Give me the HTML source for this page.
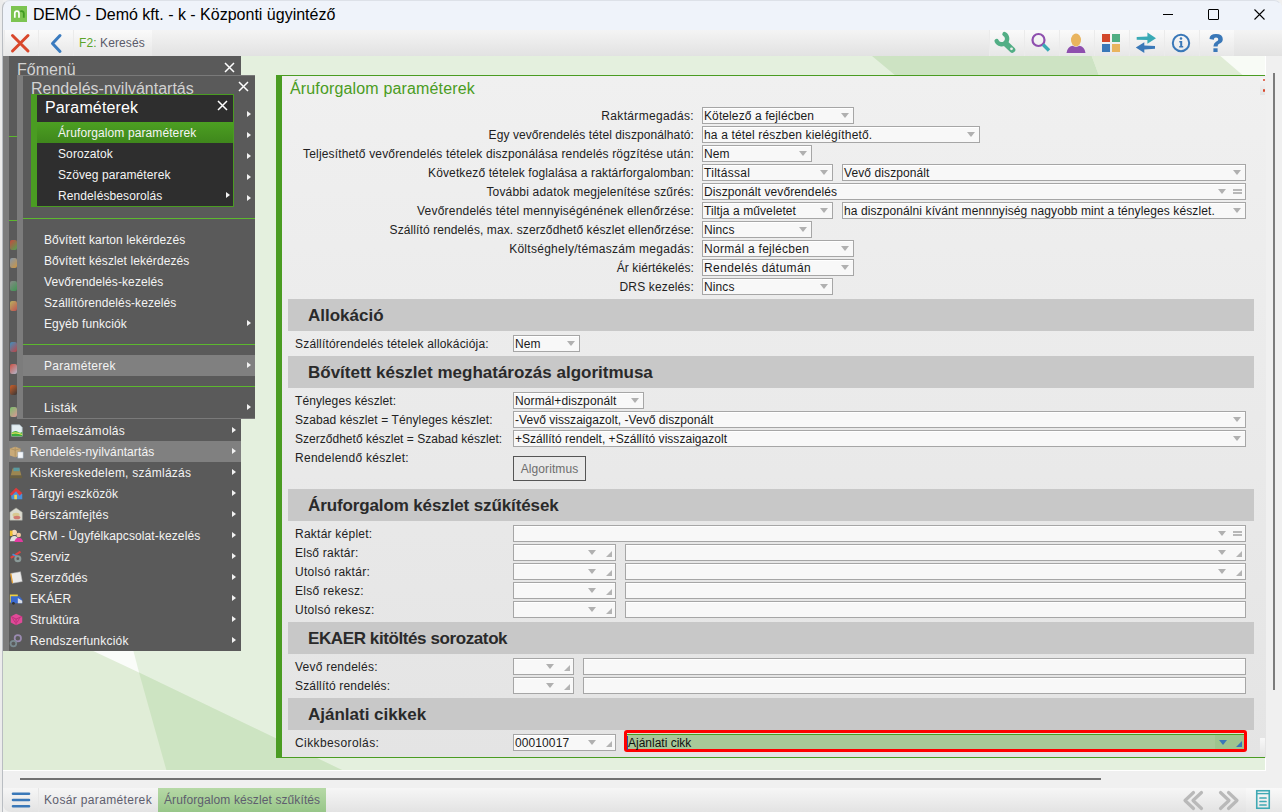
<!DOCTYPE html>
<html><head><meta charset="utf-8"><style>
*{box-sizing:border-box;margin:0;padding:0}
html,body{width:1282px;height:812px;overflow:hidden;background:#f0f0f0;font-family:"Liberation Sans",sans-serif;position:relative}
.a{position:absolute}
.t{position:absolute;white-space:nowrap;font-size:12px;line-height:17px;color:#222;letter-spacing:0.1px;padding-top:1px}
.in{position:absolute;height:17px;background:#f8f8f8;border:1px solid #a6a6a6;box-shadow:inset 0 1px 0 #fff;font-size:12px;line-height:15px;padding-left:1px;padding-top:1px;white-space:nowrap;overflow:hidden;color:#1a1a1a;letter-spacing:0.1px}
.arr{position:absolute;width:0;height:0;border-left:4px solid transparent;border-right:4px solid transparent;border-top:5px solid #b0b0b0}
.rs{position:absolute;width:0;height:0;border-left:6px solid transparent;border-bottom:6px solid #b4b4b4}
.eq{position:absolute;width:9px;height:5px;border-top:2px solid #b8b8b8;border-bottom:2px solid #b8b8b8}
.hdr{position:absolute;left:288px;width:966px;height:32px;background:#c8c8c8;font-weight:bold;font-size:17px;color:#2a2a2a;padding-left:20px;padding-top:1px;line-height:32px;white-space:nowrap}
.mi{position:absolute;white-space:nowrap;font-size:12px;color:#f4f4f4;letter-spacing:0.1px;line-height:21px;padding-top:1px}
.ar{position:absolute;width:0;height:0;border-top:3.5px solid transparent;border-bottom:3.5px solid transparent;border-left:4px solid #f2f2f2}
.sep{position:absolute;height:1px;background:#5cb82e}
.cell{position:absolute;top:30px;height:26px;background:linear-gradient(#fafafa,#e7e7e7);border-left:1px solid #ebebeb}
.ttl{position:absolute;white-space:nowrap;font-size:16px;line-height:20px}
</style></head><body>
<div class="a" style="left:0px;top:0px;width:3px;height:812px;background:#ececec"></div>
<div class="a" style="left:3px;top:0px;width:1279px;height:30px;background:#eff3fa;border-top-left-radius:8px;border-top-right-radius:8px"></div>
<div class="a" style="left:11px;top:6px;width:16px;height:16px;background:#7cc452"></div>
<svg class="a" style="left:11px;top:6px" width="16" height="16"><path d="M3.8 11.8V7.2A2.1 2.1 0 0 1 8 7.2V11.8" stroke="#fff" stroke-width="1.7" fill="none"/><path d="M9.2 5.6A2.2 2.2 0 0 1 12.8 7.4V11.8" stroke="#3f9a22" stroke-width="1.8" fill="none"/></svg>
<div class="ttl" style="left:33px;top:5px;color:#000">DEMÓ - Demó kft. - k - Központi ügyintéző</div>
<div class="a" style="left:1163px;top:14px;width:10px;height:1px;background:#000"></div>
<div class="a" style="left:1208px;top:9px;width:11px;height:11px;border:1px solid #000;border-radius:1px"></div>
<svg class="a" style="left:1253px;top:8px" width="13" height="13"><path d="M1.5 1.5L11.5 11.5M11.5 1.5L1.5 11.5" stroke="#000" stroke-width="1.1"/></svg>
<div class="a" style="left:3px;top:30px;width:1279px;height:26px;background:linear-gradient(#f4f4f4,#e2e2e2)"></div>
<div class="cell" style="left:4px;top:30px;width:34px;height:26px;"></div>
<div class="cell" style="left:38px;top:30px;width:35px;height:26px;"></div>
<div class="cell" style="left:73px;top:30px;width:79px;height:26px;"></div>
<svg class="a" style="left:9px;top:33px" width="24" height="21"><path d="M3.5 2.5L19 18M19 2.5L3.5 18" stroke="#d9472b" stroke-width="3" stroke-linecap="round"/></svg>
<svg class="a" style="left:48px;top:33px" width="16" height="21"><path d="M12 2.5L4.5 10.5L12 18.5" stroke="#3a7bbf" stroke-width="3" stroke-linecap="round" stroke-linejoin="round" fill="none"/></svg>
<div class="t" style="left:79px;top:34px;letter-spacing:0.1px"><span style="color:#5aa52a">F2:</span><span style="color:#5a5a6a"> Keresés</span></div>
<div class="cell" style="left:989px;top:30px;width:35px;height:26px;"></div>
<div class="cell" style="left:1024px;top:30px;width:35px;height:26px;"></div>
<div class="cell" style="left:1059px;top:30px;width:35px;height:26px;"></div>
<div class="cell" style="left:1094px;top:30px;width:35px;height:26px;"></div>
<div class="cell" style="left:1129px;top:30px;width:35px;height:26px;"></div>
<div class="cell" style="left:1164px;top:30px;width:35px;height:26px;"></div>
<div class="cell" style="left:1199px;top:30px;width:35px;height:26px;"></div>
<svg class="a" style="left:992px;top:30px" width="30" height="26"><path d="M12.5 4.05A5.5 5.5 0 1 1 4.66 11.1" stroke="#52ae85" stroke-width="4.4" fill="none" stroke-linecap="round"/><path d="M14 13.8L20.3 19.8" stroke="#52ae85" stroke-width="6" stroke-linecap="round"/><circle cx="19.5" cy="18.8" r="1.4" fill="#ececec"/></svg>
<svg class="a" style="left:1029px;top:32px" width="22" height="22"><circle cx="9.5" cy="8" r="6" stroke="#8e4fae" stroke-width="2.2" fill="none"/><path d="M14 12.5L20 18.5" stroke="#3aaab5" stroke-width="3.4"/></svg>
<svg class="a" style="left:1065px;top:32px" width="22" height="22"><ellipse cx="11" cy="8" rx="5" ry="6.5" fill="#e9b45e"/><path d="M1.5 21Q2.5 14.5 7.5 13.8Q11 16 14.5 13.8Q19.5 14.5 20.5 21Z" fill="#8e4fae"/></svg>
<svg class="a" style="left:1100px;top:32px" width="22" height="22"><rect x="2" y="2" width="8" height="8" fill="#d2472a"/><rect x="12" y="2" width="8" height="8" fill="#4fae82"/><rect x="2" y="12" width="8" height="8" fill="#3a78b8"/><rect x="12" y="12" width="8" height="8" fill="#e9b45e"/></svg>
<svg class="a" style="left:1134px;top:32px" width="24" height="24"><path d="M2.7 4.9L13.4 4.5V0.5L22 6.3L13.4 11.7V8.1L2.7 7.7Z" fill="#3aaab5"/><path d="M21 13.9L10.3 13.6V10.3L1.8 15.6L10.3 21.1V17.4L21 16.8Z" fill="#3a78b8"/></svg>
<svg class="a" style="left:1170px;top:32px" width="22" height="22"><circle cx="11" cy="11" r="8.2" stroke="#3a78b8" stroke-width="2" fill="none"/><circle cx="11" cy="6.5" r="1.3" fill="#3a78b8"/><path d="M9.3 9H12.2V14H13.2V15.5H9.2V14H10.2V10.4H9.3Z" fill="#3a78b8"/></svg>
<svg class="a" style="left:1205px;top:32px" width="22" height="22"><path d="M4.5 7Q4.5 2 11 2Q17.8 2 17.8 7.2Q17.8 10.2 14.2 11.8Q12.6 12.6 12.6 14.5H8.4Q8.4 11.2 11 9.8Q13.3 8.7 13.3 7.2Q13.3 5.6 11 5.6Q8.8 5.6 8.8 7.8Z" fill="#3a78b8"/><rect x="8.4" y="16.3" width="4.2" height="3.7" fill="#3a78b8"/></svg>
<svg class="a" style="left:3px;top:56px" width="1263" height="714" viewBox="3 56 1263 714"><rect x="3" y="56" width="1263" height="714" fill="#e4f0de"/><polygon points="872,56 1091.7,56 1101,81 902,81" fill="#cde3c3"/><polygon points="1091.7,56 1220.4,56 1249.5,81 1101,81" fill="#e0ecd6"/><polygon points="1220.4,56 1266,56 1266,81 1249.5,81" fill="#f8fbf6"/><polygon points="-600,300 139,672.5 800,990 -600,990" fill="#e0edd7"/><polygon points="139,672.5 800,990 228,990" fill="#cde4c2"/><polygon points="40,626 139,672.5 128,630" fill="#fafcf9"/></svg>
<div class="a" style="left:1265px;top:56px;width:1px;height:715px;background:#fff"></div>
<div class="a" style="left:3px;top:770px;width:1263px;height:1px;background:#fff"></div>
<div class="a" style="left:1273px;top:73px;width:2px;height:617px;background:#7c7c7c"></div>
<div class="a" style="left:20px;top:778px;width:1081px;height:2px;background:#727272"></div>
<div class="a" style="left:3px;top:788px;width:1279px;height:24px;background:linear-gradient(#f6f6f6,#e3e3e3);border-bottom-left-radius:8px"></div>
<div class="a" style="left:38px;top:788px;width:1px;height:24px;background:#e6e6e6"></div>
<svg class="a" style="left:10px;top:791px" width="22" height="18"><path d="M3 2.8H19M3 9H19M3 15.2H19" stroke="#3a78b8" stroke-width="2.6" stroke-linecap="round"/></svg>
<div class="t" style="left:44px;top:791px;color:#5e5e6e;letter-spacing:0.35px">Kosár paraméterek</div>
<div class="a" style="left:158px;top:788px;width:168px;height:24px;background:linear-gradient(#b6d9a6,#98c689)"></div>
<div class="t" style="left:164px;top:791px;color:#5e5e6e">Áruforgalom készlet szűkítés</div>
<svg class="a" style="left:1180px;top:789px" width="64" height="22"><path d="M13.5 3.5L5 11.5L13.5 19.5M21.5 3.5L13 11.5L21.5 19.5" stroke="#b9b9b9" stroke-width="3.2" fill="none" stroke-linecap="round" stroke-linejoin="round"/><path d="M40.5 3.5L49 11.5L40.5 19.5M48.5 3.5L57 11.5L48.5 19.5" stroke="#b9b9b9" stroke-width="3.2" fill="none" stroke-linecap="round" stroke-linejoin="round"/></svg>
<div class="a" style="left:1246px;top:788px;width:36px;height:24px;background:linear-gradient(#f9f9f9,#e6e6e6)"></div>
<svg class="a" style="left:1255px;top:789px" width="17" height="22"><rect x="1.75" y="1.75" width="12.5" height="17.5" fill="none" stroke="#40a9b4" stroke-width="1.6"/><path d="M1.5 4.6H14.5" stroke="#40a9b4" stroke-width="1.4"/><path d="M5 9H11M5 12.5H11M5 16H11" stroke="#40a9b4" stroke-width="1.7" stroke-linecap="round"/></svg>
<div class="a" style="left:276px;top:75px;width:990px;height:683px;background:linear-gradient(#f0f0f0,#e4e4e4)"></div>
<div class="a" style="left:276px;top:75px;width:989px;height:1px;background:#4a9c22"></div>
<div class="a" style="left:276px;top:75px;width:6px;height:683px;background:#4a9c22"></div>
<div class="a" style="left:276px;top:757px;width:989px;height:1px;background:#4a9c22"></div>
<div class="a" style="left:1260px;top:78px;width:5px;height:17px;background:linear-gradient(#f6f6f6,#e2e2e2)"></div>
<div class="a" style="left:1263px;top:79px;width:2px;height:2px;background:#d9472b;border-radius:1px"></div>
<div class="a" style="left:1263px;top:89px;width:2px;height:3px;background:#d9472b;border-radius:1px"></div>
<div class="t" style="left:290px;top:78px;font-size:16px;line-height:20px;color:#4a9c22;letter-spacing:0.15px">Áruforgalom paraméterek</div>
<div class="t" style="right:588px;top:107px;text-align:right;letter-spacing:0.33px">Raktármegadás:</div>
<div class="in" style="left:702px;top:107px;width:152px;">Kötelező a fejlécben<div class="arr" style="left:138px;top:5px"></div></div>
<div class="t" style="right:588px;top:126px;text-align:right;letter-spacing:0.09px">Egy vevőrendelés tétel diszponálható:</div>
<div class="in" style="left:702px;top:126px;width:278px;letter-spacing:0.15px">ha a tétel részben kielégíthető.<div class="arr" style="left:264px;top:5px"></div></div>
<div class="t" style="right:588px;top:145px;text-align:right;letter-spacing:0.16px">Teljesíthető vevőrendelés tételek diszponálása rendelés rögzítése után:</div>
<div class="in" style="left:702px;top:145px;width:110px;">Nem<div class="arr" style="left:96px;top:5px"></div></div>
<div class="t" style="right:588px;top:164px;text-align:right;letter-spacing:0.12px">Következő tételek foglalása a raktárforgalomban:</div>
<div class="in" style="left:702px;top:164px;width:131px;letter-spacing:0.3px">Tiltással<div class="arr" style="left:117px;top:5px"></div></div>
<div class="in" style="left:842px;top:164px;width:404px;">Vevő diszponált<div class="arr" style="left:390px;top:5px"></div></div>
<div class="t" style="right:588px;top:183px;text-align:right;letter-spacing:0.19px">További adatok megjelenítése szűrés:</div>
<div class="in" style="left:702px;top:183px;width:544px;">Diszponált vevőrendelés<div class="arr" style="left:515px;top:5px"></div><div class="eq" style="left:530px;top:5px"></div></div>
<div class="t" style="right:588px;top:202px;text-align:right;letter-spacing:0.2px">Vevőrendelés tétel mennyiségénének ellenőrzése:</div>
<div class="in" style="left:702px;top:202px;width:131px;">Tiltja a műveletet<div class="arr" style="left:117px;top:5px"></div></div>
<div class="in" style="left:842px;top:202px;width:404px;">ha diszponálni kívánt mennnyiség nagyobb mint a tényleges készlet.<div class="arr" style="left:390px;top:5px"></div></div>
<div class="t" style="right:588px;top:221px;text-align:right;letter-spacing:0.1px">Szállító rendelés, max. szerződhető készlet ellenőrzése:</div>
<div class="in" style="left:702px;top:221px;width:110px;">Nincs<div class="arr" style="left:96px;top:5px"></div></div>
<div class="t" style="right:588px;top:240px;text-align:right;letter-spacing:0.28px">Költséghely/témaszám megadás:</div>
<div class="in" style="left:702px;top:240px;width:152px;letter-spacing:0.28px">Normál a fejlécben<div class="arr" style="left:138px;top:5px"></div></div>
<div class="t" style="right:588px;top:259px;text-align:right;letter-spacing:0.08px">Ár kiértékelés:</div>
<div class="in" style="left:702px;top:259px;width:152px;letter-spacing:0.4px">Rendelés dátumán<div class="arr" style="left:138px;top:5px"></div></div>
<div class="t" style="right:588px;top:278px;text-align:right;letter-spacing:0.15px">DRS kezelés:</div>
<div class="in" style="left:702px;top:278px;width:131px;">Nincs<div class="arr" style="left:117px;top:5px"></div></div>
<div class="hdr" style="top:299px;letter-spacing:0px">Allokáció</div>
<div class="t" style="left:295px;top:335px;letter-spacing:0.19px">Szállítórendelés tételek allokációja:</div>
<div class="in" style="left:513px;top:335px;width:67px;">Nem<div class="arr" style="left:53px;top:5px"></div></div>
<div class="hdr" style="top:356px;letter-spacing:0px">Bővített készlet meghatározás algoritmusa</div>
<div class="t" style="left:295px;top:392px;letter-spacing:0.1px">Tényleges készlet:</div>
<div class="in" style="left:513px;top:392px;width:131px;">Normál+diszponált<div class="arr" style="left:117px;top:5px"></div></div>
<div class="t" style="left:295px;top:411px;letter-spacing:0.1px">Szabad készlet = Tényleges készlet:</div>
<div class="in" style="left:513px;top:411px;width:733px;letter-spacing:0.04px">-Vevő visszaigazolt, -Vevő diszponált<div class="arr" style="left:719px;top:5px"></div></div>
<div class="t" style="left:295px;top:430px;letter-spacing:0.02px">Szerződhető készlet = Szabad készlet:</div>
<div class="in" style="left:513px;top:430px;width:733px;letter-spacing:0.03px">+Szállító rendelt, +Szállító visszaigazolt<div class="arr" style="left:719px;top:5px"></div></div>
<div class="t" style="left:295px;top:449px;letter-spacing:0.27px">Rendelendő készlet:</div>
<div class="a" style="left:513px;top:456px;width:73px;height:25px;border:1px solid #555;background:transparent;font-size:12px;line-height:23px;padding-top:1px;color:#6e6e6e;text-align:center;letter-spacing:0.1px">Algoritmus</div>
<div class="hdr" style="top:489px;letter-spacing:-0.12px">Áruforgalom készlet szűkítések</div>
<div class="t" style="left:295px;top:525px;letter-spacing:0.24px">Raktár képlet:</div>
<div class="in" style="left:513px;top:525px;width:733px;"><div class="arr" style="left:704px;top:5px"></div><div class="eq" style="left:719px;top:5px"></div></div>
<div class="t" style="left:295px;top:544px;letter-spacing:0.23px">Első raktár:</div>
<div class="in" style="left:513px;top:544px;width:103px;"><div class="arr" style="left:74px;top:5px"></div><div class="rs" style="left:92px;top:6px"></div></div>
<div class="in" style="left:625px;top:544px;width:621px;"><div class="arr" style="left:592px;top:5px"></div><div class="rs" style="left:610px;top:6px"></div></div>
<div class="t" style="left:295px;top:563px;letter-spacing:0.26px">Utolsó raktár:</div>
<div class="in" style="left:513px;top:563px;width:103px;"><div class="arr" style="left:74px;top:5px"></div><div class="rs" style="left:92px;top:6px"></div></div>
<div class="in" style="left:625px;top:563px;width:621px;"><div class="arr" style="left:592px;top:5px"></div><div class="rs" style="left:610px;top:6px"></div></div>
<div class="t" style="left:295px;top:582px;letter-spacing:0.29px">Első rekesz:</div>
<div class="in" style="left:513px;top:582px;width:103px;"><div class="arr" style="left:74px;top:5px"></div><div class="rs" style="left:92px;top:6px"></div></div>
<div class="in" style="left:625px;top:582px;width:621px;"></div>
<div class="t" style="left:295px;top:601px;letter-spacing:0.26px">Utolsó rekesz:</div>
<div class="in" style="left:513px;top:601px;width:103px;"><div class="arr" style="left:74px;top:5px"></div><div class="rs" style="left:92px;top:6px"></div></div>
<div class="in" style="left:625px;top:601px;width:621px;"></div>
<div class="hdr" style="top:622px;letter-spacing:-0.4px">EKAER kitöltés sorozatok</div>
<div class="t" style="left:295px;top:658px;letter-spacing:0.24px">Vevő rendelés:</div>
<div class="in" style="left:513px;top:658px;width:61px;"><div class="arr" style="left:32px;top:5px"></div><div class="rs" style="left:50px;top:6px"></div></div>
<div class="in" style="left:583px;top:658px;width:663px;"></div>
<div class="t" style="left:295px;top:677px;letter-spacing:0.18px">Szállító rendelés:</div>
<div class="in" style="left:513px;top:677px;width:61px;"><div class="arr" style="left:32px;top:5px"></div><div class="rs" style="left:50px;top:6px"></div></div>
<div class="in" style="left:583px;top:677px;width:663px;"></div>
<div class="hdr" style="top:698px;letter-spacing:0px">Ajánlati cikkek</div>
<div class="t" style="left:295px;top:734px;letter-spacing:0.4px">Cikkbesorolás:</div>
<div class="in" style="left:513px;top:734px;width:103px;">00010017<div class="arr" style="left:74px;top:5px"></div><div class="rs" style="left:92px;top:6px"></div></div>
<div class="a" style="left:624px;top:730px;width:623px;height:22px;border:3px solid #ff0000;border-radius:3px;background:#a8c898"></div>
<div class="a" style="left:627px;top:733px;width:617px;height:1px;background:#d8e6d0"></div>
<div class="a" style="left:627px;top:734px;width:617px;height:1px;background:#4a9c22"></div>
<div class="t" style="left:627px;top:735px;line-height:15px;color:#111;letter-spacing:0"><span style="border-left:1px solid #3050a0">Ajánlati cikk</span></div>
<div class="a" style="left:1215px;top:735px;width:29px;height:14px;background:#9ec48e"></div>
<div class="arr" style="left:1219px;top:740px;border-top-color:#3a78b8"></div>
<div class="rs" style="left:1236px;top:741px;border-bottom-color:#3a78b8"></div>
<div class="a" style="left:1260px;top:738px;width:5px;height:19px;background:linear-gradient(#f8f8f8,#e4e4e4)"></div>
<div class="a" style="left:3px;top:56px;width:238px;height:595px;background:#5a5a5a"></div>
<div class="a" style="left:3px;top:56px;width:6px;height:595px;background:#7c7c7c"></div>
<div class="ttl" style="left:17px;top:60px;color:#d2d2d2">Főmenü</div>
<svg class="a" style="left:224px;top:62px" width="11" height="11"><path d="M1 1L10 10M10 1L1 10" stroke="#fff" stroke-width="1.5"/></svg>
<div class="a" style="left:9px;top:220px;width:8px;height:1px;background:#5cb82e"></div>
<div class="a" style="left:9px;top:136px;width:8px;height:1px;background:#5cb82e"></div>
<div class="a" style="left:10px;top:240px;width:7px;height:10px;background:linear-gradient(135deg,#d8463a,#4fae52);border-radius:2px;opacity:0.85"></div>
<div class="a" style="left:10px;top:258px;width:7px;height:10px;background:linear-gradient(135deg,#8aa0b8,#e0a040);border-radius:2px;opacity:0.85"></div>
<div class="a" style="left:10px;top:281px;width:7px;height:10px;background:linear-gradient(135deg,#909090,#3aa050);border-radius:2px;opacity:0.85"></div>
<div class="a" style="left:10px;top:301px;width:7px;height:10px;background:linear-gradient(135deg,#c8c060,#d05050);border-radius:2px;opacity:0.85"></div>
<div class="a" style="left:10px;top:342px;width:7px;height:10px;background:linear-gradient(135deg,#3a9ad0,#d04040);border-radius:2px;opacity:0.85"></div>
<div class="a" style="left:10px;top:364px;width:7px;height:10px;background:linear-gradient(135deg,#e05040,#c0c8e0);border-radius:2px;opacity:0.85"></div>
<div class="a" style="left:10px;top:385px;width:7px;height:10px;background:linear-gradient(135deg,#e06020,#303030);border-radius:2px;opacity:0.85"></div>
<div class="a" style="left:10px;top:407px;width:7px;height:10px;background:linear-gradient(135deg,#80d070,#f0a0a0);border-radius:2px;opacity:0.85"></div>
<svg class="a" style="left:9px;top:423px" width="15" height="15" viewBox="0 0 17 17"><path d="M3 2H12L15 5V15H3Z" fill="#e4eef2" stroke="#a8b8c0" stroke-width="0.8"/><path d="M3 11Q7 8 10 10Q13 12 15 10V15H3Z" fill="#3cae3c"/><path d="M3 12Q8 10 15 13" stroke="#e8e060" stroke-width="1.2" fill="none"/></svg>
<div class="mi" style="left:30px;top:420px;line-height:21px;letter-spacing:0.32px">Témaelszámolás</div>
<div class="ar" style="left:232px;top:427px"></div>
<div class="a" style="left:9px;top:441px;width:232px;height:21px;background:#808080"></div>
<svg class="a" style="left:9px;top:444px" width="15" height="15" viewBox="0 0 17 17"><path d="M1 5L7 3L13 5V13L7 15L1 13Z" fill="#c9aa78"/><path d="M7 3V15M1 5L7 7L13 5" stroke="#a58a5c" stroke-width="0.8" fill="none"/><rect x="10" y="9" width="6" height="7" fill="#f4f6fa" stroke="#9ab" stroke-width="0.6"/></svg>
<div class="mi" style="left:30px;top:441px;line-height:21px;letter-spacing:0.1px">Rendelés-nyilvántartás</div>
<div class="ar" style="left:232px;top:448px"></div>
<svg class="a" style="left:9px;top:465px" width="15" height="15" viewBox="0 0 17 17"><path d="M2 12L4 4H12L14 12Z" fill="#9c8650"/><rect x="5" y="3" width="7" height="4" fill="#5a9aa0"/><path d="M1 12H15V15H1Z" fill="#6a6040"/></svg>
<div class="mi" style="left:30px;top:462px;line-height:21px;letter-spacing:0.25px">Kiskereskedelem, számlázás</div>
<div class="ar" style="left:232px;top:469px"></div>
<svg class="a" style="left:9px;top:486px" width="15" height="15" viewBox="0 0 17 17"><path d="M2 9L8 3L15 9V15H3Z" fill="#4a90d8"/><path d="M1 9L8 2L15 8L12 11L8 6L3 11Z" fill="#e03a3a"/><rect x="6" y="10" width="3" height="5" fill="#f0d050"/></svg>
<div class="mi" style="left:30px;top:483px;line-height:21px;letter-spacing:0.1px">Tárgyi eszközök</div>
<div class="ar" style="left:232px;top:490px"></div>
<svg class="a" style="left:9px;top:507px" width="15" height="15" viewBox="0 0 17 17"><path d="M1 6L8 1L15 6V15H1Z" fill="#dcdcd0" stroke="#a0a098" stroke-width="0.6"/><ellipse cx="8" cy="9" rx="4" ry="2.5" fill="#d8c890"/><ellipse cx="9" cy="12" rx="4" ry="2" fill="#d07a70"/></svg>
<div class="mi" style="left:30px;top:504px;line-height:21px;letter-spacing:0.2px">Bérszámfejtés</div>
<div class="ar" style="left:232px;top:511px"></div>
<svg class="a" style="left:9px;top:528px" width="15" height="15" viewBox="0 0 17 17"><circle cx="6" cy="5" r="3" fill="#f4d8b8"/><path d="M1 15Q2 9 6 9Q10 9 11 15Z" fill="#e0e0e0"/><circle cx="11" cy="8" r="2.6" fill="#f0c8a0"/><path d="M6 16Q7 11 11 11Q15 11 16 16Z" fill="#e23aa0"/><rect x="1" y="3" width="3" height="6" fill="#f0c030"/></svg>
<div class="mi" style="left:30px;top:525px;line-height:21px;letter-spacing:0.1px">CRM - Ügyfélkapcsolat-kezelés</div>
<div class="ar" style="left:232px;top:532px"></div>
<svg class="a" style="left:9px;top:549px" width="15" height="15" viewBox="0 0 17 17"><path d="M2 10L13 3" stroke="#e04040" stroke-width="2.4"/><path d="M4 6L10 9" stroke="#4a90d8" stroke-width="2"/><circle cx="10" cy="11" r="4" fill="#8a9a98"/><circle cx="10" cy="11" r="1.6" fill="#5a5a5a"/></svg>
<div class="mi" style="left:30px;top:546px;line-height:21px;letter-spacing:0.1px">Szerviz</div>
<div class="ar" style="left:232px;top:553px"></div>
<svg class="a" style="left:9px;top:570px" width="15" height="15" viewBox="0 0 17 17"><path d="M2 4L13 2L15 13L4 15Z" fill="#ececec" stroke="#b8b8b8" stroke-width="0.6"/><path d="M2 4L4 15" stroke="#e8a030" stroke-width="1.4"/></svg>
<div class="mi" style="left:30px;top:567px;line-height:21px;letter-spacing:0.1px">Szerződés</div>
<div class="ar" style="left:232px;top:574px"></div>
<svg class="a" style="left:9px;top:591px" width="15" height="15" viewBox="0 0 17 17"><path d="M1 4H10V13H1Z" fill="#f0d040"/><path d="M2 6H12L15 10V14H2Z" fill="#3a6ad0"/><path d="M10 8L15 11V14H10Z" fill="#d8dce4"/><circle cx="5" cy="14" r="1.6" fill="#303030"/></svg>
<div class="mi" style="left:30px;top:588px;line-height:21px;letter-spacing:0.1px">EKÁER</div>
<div class="ar" style="left:232px;top:595px"></div>
<svg class="a" style="left:9px;top:612px" width="15" height="15" viewBox="0 0 17 17"><path d="M2 5L8 2L15 5V12L8 15L2 12Z" fill="#e04a98"/><path d="M2 5L8 8L15 5M8 8V15" stroke="#b02a70" stroke-width="0.9" fill="none"/><path d="M4 7L7 12M12 7L9 12" stroke="#b02a70" stroke-width="0.8"/></svg>
<div class="mi" style="left:30px;top:609px;line-height:21px;letter-spacing:0.1px">Struktúra</div>
<div class="ar" style="left:232px;top:616px"></div>
<svg class="a" style="left:9px;top:633px" width="15" height="15" viewBox="0 0 17 17"><circle cx="10" cy="6" r="3.6" fill="none" stroke="#9a8ab0" stroke-width="2"/><circle cx="5" cy="12" r="3.2" fill="none" stroke="#7a8a90" stroke-width="2"/></svg>
<div class="mi" style="left:30px;top:630px;line-height:21px;letter-spacing:0.2px">Rendszerfunkciók</div>
<div class="ar" style="left:232px;top:637px"></div>
<div class="a" style="left:17px;top:75px;width:238px;height:344px;background:#5a5a5a;border-top:1px solid #7a7a7a;border-bottom:1px solid #7a7a7a"></div>
<div class="a" style="left:17px;top:75px;width:6px;height:344px;background:#7c7c7c"></div>
<div class="ttl" style="left:31px;top:79px;color:#d2d2d2">Rendelés-nyilvántartás</div>
<svg class="a" style="left:238px;top:81px" width="11" height="11"><path d="M1 1L10 10M10 1L1 10" stroke="#fff" stroke-width="1.5"/></svg>
<div class="ar" style="left:247px;top:111px"></div>
<div class="ar" style="left:247px;top:132px"></div>
<div class="ar" style="left:247px;top:153px"></div>
<div class="ar" style="left:247px;top:174px"></div>
<div class="ar" style="left:247px;top:195px"></div>
<div class="a" style="left:23px;top:218px;width:232px;height:1px;background:#5cb82e"></div>
<div class="mi" style="left:44px;top:229px;">Bővített karton lekérdezés</div>
<div class="mi" style="left:44px;top:250px;">Bővített készlet lekérdezés</div>
<div class="mi" style="left:44px;top:271px;">Vevőrendelés-kezelés</div>
<div class="mi" style="left:44px;top:292px;">Szállítórendelés-kezelés</div>
<div class="mi" style="left:44px;top:313px;">Egyéb funkciók</div>
<div class="ar" style="left:247px;top:320px"></div>
<div class="a" style="left:23px;top:344px;width:232px;height:1px;background:#5cb82e"></div>
<div class="a" style="left:23px;top:355px;width:232px;height:21px;background:#808080"></div>
<div class="mi" style="left:44px;top:355px;letter-spacing:0.28px">Paraméterek</div>
<div class="ar" style="left:247px;top:362px"></div>
<div class="a" style="left:23px;top:386px;width:232px;height:1px;background:#5cb82e"></div>
<div class="mi" style="left:44px;top:397px;letter-spacing:0.35px">Listák</div>
<div class="ar" style="left:247px;top:404px"></div>
<div class="a" style="left:31px;top:94px;width:203px;height:113px;background:#4a9c22"></div>
<div class="a" style="left:37px;top:95px;width:196px;height:27px;background:#2e2e2e"></div>
<div class="ttl" style="left:45px;top:98px;color:#fff;letter-spacing:0.15px">Paraméterek</div>
<svg class="a" style="left:217px;top:100px" width="11" height="11"><path d="M1 1L10 10M10 1L1 10" stroke="#fff" stroke-width="1.5"/></svg>
<div class="a" style="left:37px;top:122px;width:196px;height:21px;background:linear-gradient(#4c9f22,#3f871c)"></div>
<div class="a" style="left:37px;top:143px;width:196px;height:63px;background:#2e2e2e"></div>
<div class="mi" style="left:58px;top:122px;">Áruforgalom paraméterek</div>
<div class="mi" style="left:58px;top:143px;">Sorozatok</div>
<div class="mi" style="left:58px;top:164px;">Szöveg paraméterek</div>
<div class="mi" style="left:58px;top:185px;">Rendelésbesorolás</div>
<div class="ar" style="left:226px;top:192px"></div>
<div class="a" style="left:2px;top:0px;width:1280px;height:830px;border:1px solid #b9bdc2;border-top-color:#dde1e8;border-right-color:transparent;border-radius:8px;pointer-events:none"></div>
</body></html>
